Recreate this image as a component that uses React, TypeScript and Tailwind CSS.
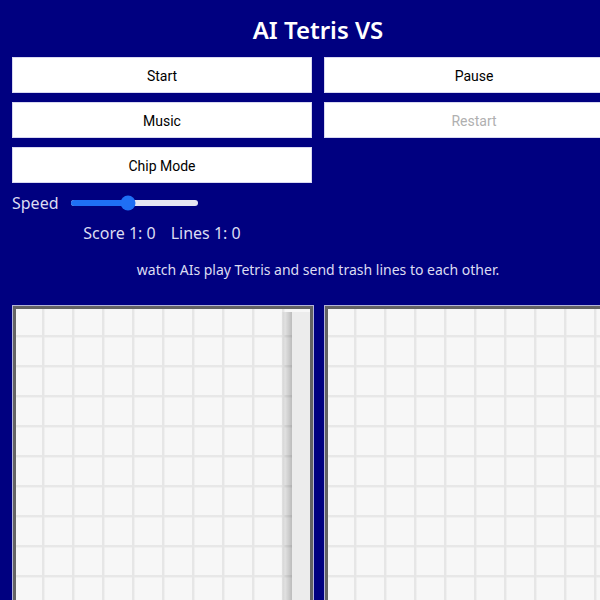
import React from "react";

const buttons: { label: string; disabled?: boolean }[] = [
  { label: "Start" },
  { label: "Pause" },
  { label: "Music" },
  { label: "Restart", disabled: true },
  { label: "Chip Mode" },
];

function Board({ shade }: { shade?: boolean }) {
  return (
    <div className="relative w-[302px] h-[602px] shrink-0 border border-[#b4b4d8] bg-[#f7f7f7]">
      <div className="absolute inset-0 bg-[linear-gradient(to_right,#e9e9e9_0px,#e3e3e3_1px,#e9e9e9_2px,transparent_3px),linear-gradient(to_bottom,#eaeaea_0px,#e5e5e5_1px,#eaeaea_2px,transparent_3px)] bg-[size:30px_30px] bg-[position:-1px_-1px]" />
      {shade && (
        <div className="absolute top-[6px] bottom-0 left-[268px] flex">
          <div className="w-[11px] h-full bg-[linear-gradient(to_right,rgba(0,0,0,0),rgba(0,0,0,0.24))]" />
          <div className="w-[18px] h-full bg-[#ececec]" />
        </div>
      )}
      <div className="absolute inset-0 border-[3px] border-[#646464]" />
    </div>
  );
}

export default function App() {
  return (
    <div className="w-[600px] h-[600px] overflow-hidden bg-[#000080]">
      <div className="w-[636px] px-3 pt-3 flex flex-col font-['Noto_Sans',sans-serif] text-[#dcdcf2]">
        <h1 className="text-center text-white font-semibold text-[24px] leading-[36px]">AI Tetris VS</h1>

        <div className="mt-[9px] grid grid-cols-[300px_300px] gap-x-3 gap-y-[9px] font-['Roboto',sans-serif]">
          {buttons.map((b) => (
            <button
              key={b.label}
              className={`h-9 pt-[2px] bg-white border border-[#d8d8f0] text-[14px] ${b.disabled ? "text-[#b0b0b0]" : "text-black"}`}
            >
              {b.label}
            </button>
          ))}
        </div>

        <div className="mt-[10px] h-5 flex items-center gap-3">
          <span className="text-[16px] leading-5">Speed</span>
          <div className="relative w-[127px] h-[6px] rounded-full bg-[#e6e6f2]">
            <div className="h-full w-[57px] rounded-full bg-[#1f6ff5]" />
            <div className="absolute top-1/2 left-[57px] w-[15px] h-[15px] -translate-x-1/2 -translate-y-1/2 rounded-full bg-[#1f6ff5]" />
          </div>
        </div>

        <div className="mt-[10px] w-[300px] h-5 flex justify-center gap-[15px] text-[16px] leading-5">
          <span>Score 1: 0</span>
          <span>Lines 1: 0</span>
        </div>

        <p className="mt-[17px] text-center text-[14px] leading-5">
          watch AIs play Tetris and send trash lines to each other.
        </p>

        <div className="mt-[25px] flex gap-[10px]">
          <Board shade />
          <Board />
        </div>
      </div>
    </div>
  );
}
